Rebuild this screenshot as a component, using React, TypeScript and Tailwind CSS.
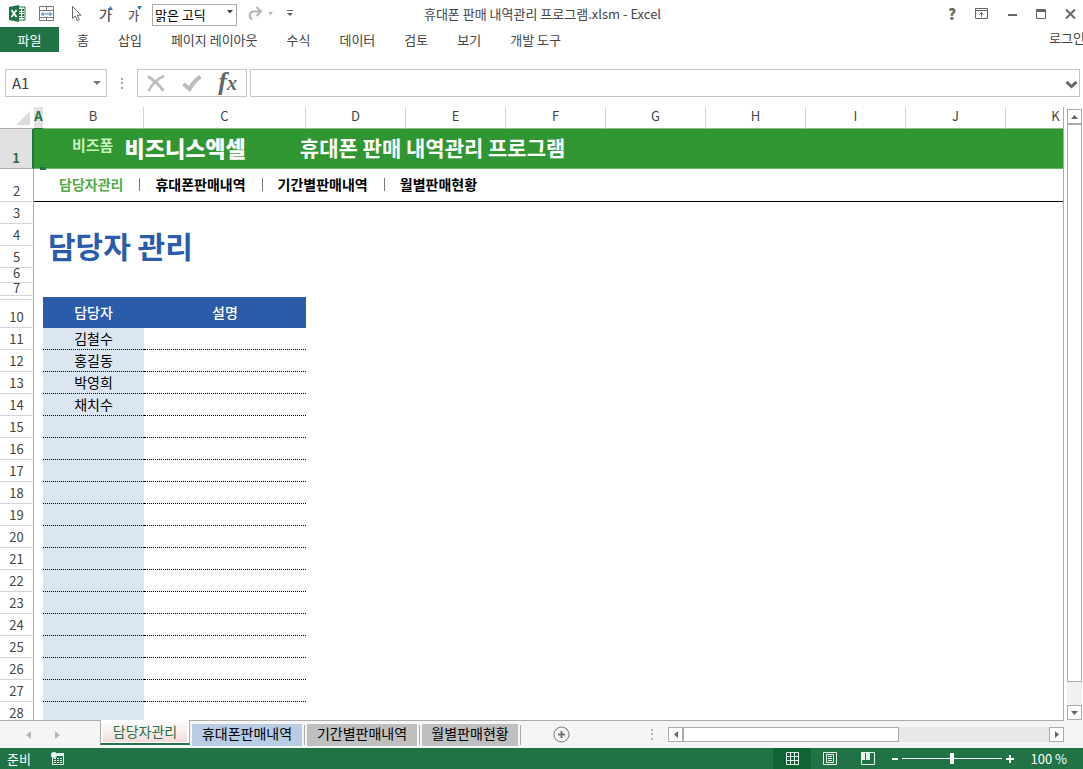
import clsx from "clsx";

const columns = ["B", "C", "D", "E", "F", "G", "H", "I", "J", "K"];
const menus = ["홈", "삽입", "페이지 레이아웃", "수식", "데이터", "검토", "보기", "개발 도구"];
const links = ["담당자관리", "휴대폰판매내역", "기간별판매내역", "월별판매현황"];
const people = ["김철수", "홍길동", "박영희", "채치수"];
const dataRows = Array.from({ length: 18 }, (_, i) => ({ row: i + 11, name: people[i] ?? "" }));

const sheetTabs = [
    { label: "휴대폰판매내역", color: "bg-[#b8cce4]", width: "w-[110px]" },
    { label: "기간별판매내역", color: "bg-[#bfbfbf]", width: "w-[110px]" },
    { label: "월별판매현황", color: "bg-[#bfbfbf]", width: "w-24" },
];

function RowHead({ n, height, className }: { n?: number; height: string; className?: string }) {
    return (
        <th
            scope="row"
            className={clsx(
                "border-r border-b border-r-[#ababab] border-b-[#d4d4d4] p-0 text-[13px] font-normal text-[#444]",
                height,
                className ?? "align-bottom leading-5",
            )}
        >
            {n}
        </th>
    );
}

function TitleBar() {
    return (
        <header className="flex h-[27px] items-center justify-between">
            <div className="flex flex-1 items-center pl-[9px]">
                <svg width="17" height="17" viewBox="0 0 17 17" aria-hidden="true">
                    <path d="M9 2h7v13H9z" fill="#fff" stroke="#217346" />
                    <path d="M10 4h2v2h-2zM13 4h2v2h-2zM10 7h2v1h-2zM13 7h2v1h-2zM10 9h2v2h-2zM13 9h2v2h-2zM10 12h2v1h-2zM13 12h2v1h-2z" fill="#217346" />
                    <path d="M0 2l10-2v17L0 15z" fill="#217346" />
                    <path d="M2.500 5l5 7M7.500 5l-5 7" stroke="#fff" strokeWidth="1.700" />
                </svg>
                <button aria-label="병합" className="ml-3">
                    <svg width="17" height="16" viewBox="0 0 17 16" fill="none">
                        <path d="M1.500.5h14v14h-14zM1.500 4.500h14M1.500 11.500h14M8.500.5v4M8.500 11.500v3" stroke="#777" />
                        <path d="M3.500 8h10M5.500 6l-2 2 2 2M11.500 6l2 2-2 2" stroke="#3a78b5" />
                    </svg>
                </button>
                <button aria-label="개체 선택" className="ml-4">
                    <svg width="12" height="17" viewBox="0 0 12 17" fill="#fff" stroke="#666">
                        <path d="M1.500 1.500v12l2.800-2.600 2 4.600 2-.9-2-4.400h3.700z" />
                    </svg>
                </button>
                <button aria-label="글꼴 크게" className="ml-4 flex items-center">
                    <span className="text-sm leading-5 font-medium text-[#555]">가</span>
                    <svg className="-ml-1 mb-3" width="5" height="4" viewBox="0 0 5 4" fill="#3a78b5"><path d="M0 4l2.500-4L5 4z" /></svg>
                </button>
                <button aria-label="글꼴 작게" className="ml-[15px] flex items-center">
                    <span className="pt-1 text-xs leading-4 font-medium text-[#555]">가</span>
                    <svg className="-ml-[2px] mb-3" width="5" height="4" viewBox="0 0 5 4" fill="#3a78b5"><path d="M0 0l2.500 4L5 0z" /></svg>
                </button>
                <div className="relative ml-[10px]">
                    <select aria-label="글꼴" className="h-[22px] w-[85px] appearance-none border border-[#ababab] bg-white pb-[2px] pl-[2px] text-[13px] leading-5 text-black">
                        <option>맑은 고딕</option>
                    </select>
                    <svg className="pointer-events-none absolute top-[9px] right-1" width="6" height="4" viewBox="0 0 6 4" fill="#444"><path d="M0 0h6L3 3.500z" /></svg>
                </div>
                <button aria-label="다시 실행" className="ml-[10px] flex items-center gap-[5px]">
                    <svg width="16" height="15" viewBox="0 0 16 15" fill="none" stroke="#b5b5b5" strokeWidth="2">
                        <path d="M13 5.500H6.500a4 4 0 0 0-1 7.800M9.500 1l4.500 4.500L9.500 10" />
                    </svg>
                    <svg width="5" height="3" viewBox="0 0 5 3" fill="#b5b5b5"><path d="M0 0h5L2.500 3z" /></svg>
                </button>
                <button aria-label="빠른 실행 도구 모음 사용자 지정" className="ml-[14px]">
                    <svg width="6" height="7" viewBox="0 0 6 7" fill="#666"><path d="M0 0h6v1H0zM0 3h6L3 6z" /></svg>
                </button>
            </div>
            <h1 className="text-[13px] leading-5 text-[#444]">휴대폰 판매 내역관리 프로그램.xlsm - Excel</h1>
            <div className="flex flex-1 items-center justify-end gap-[17px] pr-[7px] text-[#666]">
                <button aria-label="도움말" className="w-3 text-[15px] leading-5 font-black">?</button>
                <button aria-label="리본 메뉴 표시 옵션">
                    <svg width="13" height="11" viewBox="0 0 13 11" fill="none" stroke="currentColor"><path d="M.5.5h12v10H.5zM.5 2.500h12M6.500 9V4.500M4.500 6.500l2-2 2 2" /></svg>
                </button>
                <button aria-label="최소화" className="pl-[3px]">
                    <svg width="9" height="11" viewBox="0 0 9 11" fill="currentColor"><path d="M0 6h9v2H0z" /></svg>
                </button>
                <button aria-label="최대화" className="pl-[2px]">
                    <svg width="10" height="10" viewBox="0 0 10 10" fill="none" stroke="currentColor"><path d="M.5.500h9v9h-9zM0 1.500h10M0 2.500h10" /></svg>
                </button>
                <button aria-label="닫기" className="pl-[2px]">
                    <svg width="11" height="10" viewBox="0 0 11 10" stroke="currentColor" strokeWidth="2"><path d="M1 .5l9 9M10 .5l-9 9" /></svg>
                </button>
            </div>
        </header>
    );
}

function Ribbon() {
    return (
        <nav className="flex h-[25px] items-center overflow-hidden text-[13px] leading-5 whitespace-nowrap text-[#444]">
            <button className="h-full w-[59px] shrink-0 bg-[#217346] text-white">파일</button>
            <div className="ml-[18px] flex flex-1 gap-[29px]">
                {menus.map((m) => (
                    <button key={m}>{m}</button>
                ))}
            </div>
            <a href="#login" className="-mr-[2px] mb-1">로그인</a>
        </nav>
    );
}

function FormulaBar() {
    return (
        <div className="mt-[17px] flex h-7 items-stretch pr-[3px] pl-[5px]">
            <div className="relative flex">
                <input aria-label="이름 상자" defaultValue="A1" className="w-[102px] border border-[#c6c6c6] px-[6px] text-[15px] leading-5 text-[#444]" />
                <svg className="absolute top-3 right-[6px]" width="8" height="4" viewBox="0 0 8 4" fill="#777"><path d="M0 0h8L4 4z" /></svg>
            </div>
            <svg className="mx-[14px] self-center" width="2" height="11" viewBox="0 0 2 11" fill="#a5a5a5"><path d="M0 0h2v2H0zM0 4h2v2H0zM0 9h2v2H0z" /></svg>
            <div className="flex w-[110px] items-center justify-between border border-[#c6c6c6] px-[9px]">
                <button aria-label="취소">
                    <svg width="18" height="17" viewBox="0 0 18 17" fill="none" stroke="#bcbcbc"><path d="M1 1.500c5 3 10 7 15.500 14" strokeWidth="3" /><path d="M17 1C10 4 5 9 1.500 16" strokeWidth="2.500" /></svg>
                </button>
                <button aria-label="입력">
                    <svg width="20" height="17" viewBox="0 0 20 17" fill="none" stroke="#bcbcbc" strokeWidth="4"><path d="M1.500 9l6 5C10 9.500 14 4.500 18.500 1.500" /></svg>
                </button>
                <button aria-label="함수 삽입" className="pb-[3px] font-['Liberation_Serif',serif] text-[26px] leading-6 font-bold text-[#666] italic">
                    f<span className="text-xl leading-5">x</span>
                </button>
            </div>
            <div className="relative ml-[3px] flex flex-1">
                <input aria-label="수식 입력줄" className="w-full border border-[#c6c6c6] px-2 text-sm" />
                <svg className="absolute top-3 right-[2px]" width="13" height="8" viewBox="0 0 13 8" fill="none" stroke="#666" strokeWidth="3"><path d="M1.500 1l5 4.500 5-4.500" /></svg>
            </div>
        </div>
    );
}

function Sheet() {
    return (
        <div className="min-w-0 flex-1 overflow-hidden border-r border-[#ababab]">
            <table className="w-full min-w-[1106px] table-fixed border-separate border-spacing-0">
                <colgroup>
                    <col className="w-[34px]" />
                    <col className="w-[9px]" />
                    <col className="w-[101px]" />
                    <col className="w-[162px]" />
                    {columns.slice(2).map((c) => (
                        <col key={c} className="w-[100px]" />
                    ))}
                    <col />
                </colgroup>
                <thead>
                    <tr className="text-[13px] leading-[17px] text-[#444]">
                        <th aria-label="모두 선택" className="h-[22px] border-b border-[#ababab] p-0 align-bottom">
                            <svg className="mb-[3px] ml-4" width="14" height="14" viewBox="0 0 14 14" fill="#dcdcdc"><path d="M14 0v14H0z" /></svg>
                        </th>
                        <th scope="col" className="border-b border-[#217346] bg-[#e1e1e1] p-0 align-top text-[13px] leading-[17px] font-bold text-[#217346]">A</th>
                        {columns.map((c) => (
                            <th key={c} scope="col" className="border-r border-b border-r-[#d4d4d4] border-b-[#8fb98f] p-0 align-top font-normal">{c}</th>
                        ))}
                        <th className="border-b border-[#8fb98f] p-0" />
                    </tr>
                </thead>
                <tbody>
                    <tr>
                        <th scope="row" className="h-10 border-r-2 border-b border-r-[#217346] border-b-[#ababab] bg-[#e1e1e1] p-0 align-bottom text-[13px] leading-5 font-bold text-[#217346]">1</th>
                        <td colSpan={12} className="relative border-b border-[#6db56d] bg-[#309632] p-0 text-white">
                            <div className="flex items-center pb-1 pl-[38px]">
                                <span className="pb-1 text-[15px] leading-6 font-bold text-[#c9f5bd]">비즈폼</span>
                                <span className="ml-[11px] text-[22px] leading-7 font-black">비즈니스엑셀</span>
                                <span className="ml-[54px] text-[21px] leading-7 font-bold">휴대폰 판매 내역관리 프로그램</span>
                            </div>
                            <span className="absolute -bottom-[2px] left-[6px] h-[3px] w-[6px] bg-[#217346]" />
                        </td>
                    </tr>
                    <tr>
                        <RowHead n={2} height="h-[33px]" />
                        <td colSpan={12} className="border-b border-black p-0">
                            <nav className="flex items-center pb-[2px] pl-[25px] text-sm leading-5 font-bold text-black">
                                {links.map((l, i) => (
                                    <a key={l} href={`#sheet${i + 1}`} className={i === 0 ? "text-[#55aa46]" : "ml-4 flex items-center gap-[15px]"}>
                                        {i > 0 && <span className="h-[13px] w-px bg-[#777]" />}
                                        {l}
                                    </a>
                                ))}
                            </nav>
                        </td>
                    </tr>
                    <tr>
                        <RowHead n={3} height="h-[22px]" />
                        <td colSpan={12} className="p-0" />
                    </tr>
                    <tr>
                        <RowHead n={4} height="h-[22px]" />
                        <td rowSpan={2} colSpan={12} className="p-0 pb-[2px] pl-[14px]">
                            <h2 className="text-[30px] leading-10 font-bold text-[#2a5caa]">담당자 관리</h2>
                        </td>
                    </tr>
                    <tr>
                        <RowHead n={5} height="h-[22px]" />
                    </tr>
                    <tr>
                        <RowHead n={6} height="h-[15px]" className="align-top leading-[10px]" />
                        <td colSpan={12} className="p-0" />
                    </tr>
                    <tr>
                        <RowHead n={7} height="h-[13px]" className="align-top leading-[10px]" />
                        <td colSpan={12} className="p-0" />
                    </tr>
                    <tr>
                        <th className="h-px border-r border-[#ababab] p-0" />
                        <td colSpan={12} className="p-0" />
                    </tr>
                    <tr>
                        <RowHead height="h-[3px]" />
                        <td rowSpan={2} className="p-0" />
                        <td rowSpan={2} className="bg-[#2a5caa] p-0 pb-[2px] text-center text-sm leading-5 font-medium text-white">담당자</td>
                        <td rowSpan={2} className="bg-[#2a5caa] p-0 pb-[2px] text-center text-sm leading-5 font-medium text-white">설명</td>
                        <td rowSpan={2} colSpan={9} className="p-0" />
                    </tr>
                    <tr>
                        <RowHead n={10} height="h-7" />
                    </tr>
                    {dataRows.map(({ row, name }) => (
                        <tr key={row}>
                            <RowHead n={row} height="h-[22px]" />
                            <td className="p-0" />
                            <td className="border-b border-dotted border-black bg-[#dce6f1] p-0 text-center align-top text-sm leading-[21px] text-black">{name}</td>
                            <td className="border-b border-dotted border-black p-0" />
                            <td colSpan={9} className="p-0" />
                        </tr>
                    ))}
                </tbody>
            </table>
        </div>
    );
}

function VerticalScroll() {
    return (
        <div className="mt-[2px] mr-px ml-[3px] flex w-[15px] flex-col bg-[#f1f1f1]">
            <button aria-label="위로" className="flex h-[15px] items-center justify-center border border-[#ababab] bg-white">
                <svg width="7" height="4" viewBox="0 0 7 4" fill="#666"><path d="M0 4h7L3.500 0z" /></svg>
            </button>
            <div className="flex flex-1 flex-col">
                <div className="h-[96%] border border-[#ababab] bg-white" />
            </div>
            <button aria-label="아래로" className="flex h-[15px] items-center justify-center border border-[#ababab] bg-white">
                <svg width="7" height="4" viewBox="0 0 7 4" fill="#666"><path d="M0 0h7L3.500 4z" /></svg>
            </button>
        </div>
    );
}

function TabBar() {
    return (
        <div className="flex h-7 items-stretch bg-[#f5f5f5] pr-[19px]">
            <div className="flex w-[100px] items-center gap-6 border-t border-[#ababab] pl-[26px]">
                <button aria-label="이전 시트">
                    <svg width="5" height="8" viewBox="0 0 5 8" fill="#b5b5b5"><path d="M5 0v8L0 4z" /></svg>
                </button>
                <button aria-label="다음 시트">
                    <svg width="5" height="8" viewBox="0 0 5 8" fill="#b5b5b5"><path d="M0 0v8l5-4z" /></svg>
                </button>
            </div>
            <button className="mb-[3px] flex w-[90px] border-x border-b-2 border-x-[#ababab] border-b-[#217346] bg-white px-[2px] pb-px text-sm leading-[22px] whitespace-nowrap text-[#217346]">
                <span className="h-full flex-1 bg-linear-to-b from-white to-[#f4dcdb]">담당자관리</span>
            </button>
            <div className="flex flex-1 items-center border-t border-[#ababab] pl-[2px]">
                {sheetTabs.map((t) => (
                    <div key={t.label} className="mr-[2px] flex items-center gap-[2px]">
                        <button className={clsx("h-[22px] pb-[3px] text-sm leading-[19px] whitespace-nowrap text-black", t.color, t.width)}>{t.label}</button>
                        <span className="h-5 w-px bg-[#ababab]" />
                    </div>
                ))}
                <button aria-label="새 시트" className="ml-[30px]">
                    <svg width="17" height="17" viewBox="0 0 17 17" fill="none" stroke="#777"><circle cx="8.500" cy="8.500" r="7.500" /><path d="M8.500 5v7M5 8.500h7" strokeWidth="2" /></svg>
                </button>
                <svg className="mr-[15px] ml-auto" width="2" height="11" viewBox="0 0 2 11" fill="#b5b5b5"><path d="M0 0h2v2H0zM0 4h2v2H0zM0 9h2v2H0z" /></svg>
                <div className="flex h-[15px] w-[37%] min-w-[396px] bg-[#e8e8e8]">
                    <button aria-label="왼쪽으로" className="flex w-[15px] items-center justify-center border border-[#ababab] bg-white">
                        <svg width="4" height="7" viewBox="0 0 4 7" fill="#666"><path d="M4 0v7L0 3.500z" /></svg>
                    </button>
                    <div className="flex flex-1">
                        <div className="w-[59%] border border-[#ababab] bg-white" />
                    </div>
                    <button aria-label="오른쪽으로" className="flex w-[15px] items-center justify-center border border-[#ababab] bg-white">
                        <svg width="4" height="7" viewBox="0 0 4 7" fill="#666"><path d="M0 0v7l4-3.500z" /></svg>
                    </button>
                </div>
            </div>
        </div>
    );
}

function StatusBar() {
    return (
        <footer className="flex h-[21px] items-center bg-[#217346] pr-4 pl-[7px] text-[13px] leading-5 text-white">
            <span>준비</span>
            <button aria-label="매크로 기록" className="ml-5">
                <svg width="14" height="13" viewBox="0 0 14 13" fill="none">
                    <path d="M1.500 5v7.500h11v-11H6" stroke="#e8f5ec" />
                    <path d="M6 1h7v3H6z" fill="#e8f5ec" />
                    <circle cx="3" cy="3" r="3" fill="#e8f5ec" />
                    <path d="M3 6.500h2M6 6.500h2M9 6.500h2M3 8.500h2M6 8.500h2M9 8.500h2M3 10.500h2M6 10.500h2M9 10.500h2" stroke="#e8f5ec" />
                </svg>
            </button>
            <div className="ml-auto flex h-full">
                <button aria-label="기본" className="flex w-[38px] items-center justify-center bg-[#0e6433]">
                    <svg width="13" height="13" viewBox="0 0 13 13" fill="none" stroke="#e8f5ec"><path d="M.5.5h12v12H.5zM4.500.5v12M8.500.5v12M.5 4.500h12M.5 8.500h12" /></svg>
                </button>
                <button aria-label="페이지 레이아웃 보기" className="flex w-[38px] items-center justify-center">
                    <svg width="14" height="13" viewBox="0 0 14 13" fill="none" stroke="#e8f5ec"><path d="M.5.5h13v12H.5zM3.500 2.500h7v8h-7zM5 4.500h4M5 6.500h4M5 8.500h4" /></svg>
                </button>
                <button aria-label="페이지 나누기 미리 보기" className="flex w-[38px] items-center justify-center">
                    <svg width="14" height="13" viewBox="0 0 14 13" fill="none"><path d="M.5.5h13v12H.5z" stroke="#e8f5ec" /><path d="M1 1h3v7H1zM5 1h4v7H5z" fill="#e8f5ec" /></svg>
                </button>
            </div>
            <button aria-label="축소" className="ml-[5px]">
                <svg width="6" height="8" viewBox="0 0 6 8" fill="#fff"><path d="M0 3h6v2H0z" /></svg>
            </button>
            <input
                type="range"
                aria-label="확대/축소"
                defaultValue={50}
                className="mx-1 h-3 w-[100px] appearance-none bg-transparent [&::-webkit-slider-runnable-track]:h-px [&::-webkit-slider-runnable-track]:bg-white [&::-webkit-slider-thumb]:-mt-[5px] [&::-webkit-slider-thumb]:h-[11px] [&::-webkit-slider-thumb]:w-1 [&::-webkit-slider-thumb]:appearance-none [&::-webkit-slider-thumb]:bg-white"
            />
            <button aria-label="확대">
                <svg width="8" height="8" viewBox="0 0 8 8" fill="#fff"><path d="M0 3h8v2H0zM3 0h2v8H3z" /></svg>
            </button>
            <span className="ml-4 whitespace-nowrap">100 %</span>
        </footer>
    );
}

export default function App() {
    return (
        <div className="flex h-screen flex-col overflow-hidden bg-white font-['Noto_Sans_CJK_KR',sans-serif]">
            <TitleBar />
            <Ribbon />
            <FormulaBar />
            <main className="mt-[10px] flex min-h-0 flex-1">
                <Sheet />
                <VerticalScroll />
            </main>
            <TabBar />
            <StatusBar />
        </div>
    );
}
